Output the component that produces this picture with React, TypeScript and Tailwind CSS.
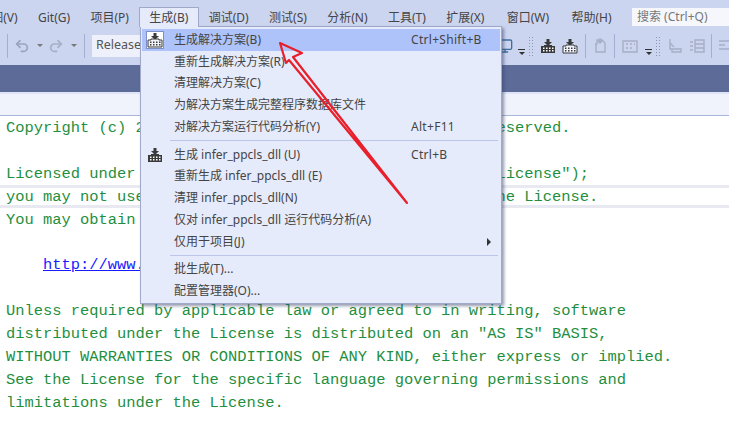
import React from "react";
import { Undo2, Redo2, Monitor } from "lucide-react";

const cjk = { fontFamily: '"Noto Sans", "Noto Sans CJK SC", sans-serif' };

function BuildIcon({ boxed = false, hollow = false }: { boxed?: boolean; hollow?: boolean }) {
  return (
    <svg width="16" height="16" viewBox="0 0 16 16" className={boxed ? "bg-white outline outline-1 outline-[#7d8fc4]" : ""}>
      <path d="M6.5 1h3v3H12L8 8 4 4h2.5z" fill="#3a3a3a" />
      <path d="M1 8h3v-1h8v1h3v7H1z" fill={hollow ? "#f2f4fb" : "#3a3a3a"} stroke="#3a3a3a" strokeWidth={hollow ? 1 : 0} />
      {[3, 6, 9, 12].map((x) => (
        <g key={x}>
          <rect x={x} y="9.5" width="1.5" height="1.5" fill={hollow ? "#3a3a3a" : "#fff"} />
          <rect x={x} y="12" width="1.5" height="1.5" fill={hollow ? "#3a3a3a" : "#fff"} />
        </g>
      ))}
    </svg>
  );
}

function Sep() {
  return <div className="w-px h-[24px] bg-[#a3aed0]" />;
}

function Caret({ color = "#777" }: { color?: string }) {
  return <div className="w-0 h-0 border-x-[3.5px] border-x-transparent border-t-[3.5px]" style={{ borderTopColor: color }} />;
}

function Grip() {
  return <div className="w-[7px] h-[20px] bg-[radial-gradient(#8b95b5_1px,transparent_1px)] bg-[length:3px_3px]" />;
}

function OverflowDrop() {
  return (
    <div className="flex flex-col items-center gap-[2px] mt-[12px]">
      <div className="w-[7px] h-px bg-[#333]" />
      <Caret color="#333" />
    </div>
  );
}

function FadedIcon({ d }: { d: string }) {
  return (
    <svg width="18" height="18" viewBox="0 0 18 18" fill="none" stroke="#a7afc6" strokeWidth="1.4">
      <path d={d} />
    </svg>
  );
}

function MenuRow({ label, shortcut, icon, active, sub }: { label: string; shortcut?: string; icon?: React.ReactNode; active?: boolean; sub?: boolean }) {
  return (
    <div className={"flex items-center h-[21.8px] text-[12px] text-[#444] " + (active ? "bg-[#afc3fb]" : "")}>
      <div className="w-[32px] flex justify-start pl-[5px]">{icon}</div>
      <div className="w-[237px] whitespace-nowrap">{label}</div>
      <div className="flex-1 whitespace-nowrap tracking-[0.3px]">{shortcut}</div>
      {sub && <div className="w-0 h-0 mr-[9px] border-y-[4px] border-y-transparent border-l-[4px] border-l-[#333]" />}
    </div>
  );
}

function MenuSep() {
  return <div className="ml-[28px] mr-[2px] my-[2.4px] h-px bg-[#bcc6e6]" />;
}

const menus = ["视图(V)", "Git(G)", "项目(P)", "生成(B)", "调试(D)", "测试(S)", "分析(N)", "工具(T)", "扩展(X)", "窗口(W)", "帮助(H)"];

const code: { text?: string; link?: boolean; current?: boolean }[] = [
  { text: "Copyright (c) 2022 PaddlePaddle Authors. All Rights Reserved." },
  {},
  { text: 'Licensed under the Apache License, Version 2.0 (the "License");' },
  { text: "you may not use this file except in compliance with the License.", current: true },
  { text: "You may obtain a copy of the License at" },
  {},
  { text: "http://www.apache.org/licenses/LICENSE-2.0", link: true },
  {},
  { text: "Unless required by applicable law or agreed to in writing, software" },
  { text: 'distributed under the License is distributed on an "AS IS" BASIS,' },
  { text: "WITHOUT WARRANTIES OR CONDITIONS OF ANY KIND, either express or implied." },
  { text: "See the License for the specific language governing permissions and" },
  { text: "limitations under the License." },
];

export default function App() {
  return (
    <div className="relative w-[729px] h-[434px] overflow-hidden bg-white flex flex-col" style={cjk}>
      {/* menu bar */}
      <div className="h-[27px] bg-[#ccd5f0] flex items-end shrink-0 text-[12px] text-[#444]">
        <div className="flex -ml-[31px] flex-1 min-w-0">
          {menus.map((m) => (
            <div
              key={m}
              className={
                "h-[20px] px-[9.2px] flex items-center whitespace-nowrap border-x border-t " +
                (m === "生成(B)" ? "relative z-20 bg-[#e6ebfb] border-[#a0aac8] " : "border-transparent ") +
                (m === "窗口(W)" || m === "帮助(H)" ? "ml-[2px]" : "")
              }
            >
              {m}
            </div>
          ))}
        </div>
      </div>
      <div className="absolute right-0 top-[8px] w-[97px] h-[18px] bg-[#f5f7fd] pl-[5px] flex items-center text-[12px] text-[#777] whitespace-nowrap">
        搜索 (Ctrl+Q)
      </div>

      {/* toolbar */}
      <div className="h-[38px] bg-[#ccd5f0] flex items-center justify-between shrink-0 pl-[7px] pb-[1px]">
        <div className="flex items-center">
          <Sep />
          <Undo2 size={16} className="ml-[6px] text-[#9aa3bd]" strokeWidth={2.6} />
          <div className="ml-[7px]"><Caret /></div>
          <Redo2 size={16} className="ml-[5px] text-[#a7afc6]" strokeWidth={2.6} />
          <div className="ml-[7px]"><Caret /></div>
          <div className="ml-[7px]"><Sep /></div>
          <div className="ml-[7px] w-[60px] h-[22px] bg-[#eef1fb] pl-[4px] flex items-center text-[12.5px] text-[#555]">Release</div>
        </div>
        <div className="flex items-center -mr-[5px]">
          <Monitor size={16} className="text-[#3f6f9f]" />
          <div className="ml-[5px]"><OverflowDrop /></div>
          <div className="ml-[3px]"><Grip /></div>
          <div className="ml-[5px]"><BuildIcon /></div>
          <div className="ml-[6px]"><BuildIcon hollow /></div>
          <div className="ml-[7px]"><Sep /></div>
          <div className="ml-[5px]"><FadedIcon d="M4 7h2V3h5l3 3v9H5V7M9 1v5M7 4l2 2 2-2" /></div>
          <div className="ml-[5px]"><Sep /></div>
          <div className="ml-[6px]"><FadedIcon d="M2 4h14v11H2zM5 7h2M9 7h2M13 7h1M5 11h2M9 11h2" /></div>
          <div className="ml-[6px]"><OverflowDrop /></div>
          <div className="ml-[3px]"><Grip /></div>
          <div className="ml-[4px]"><FadedIcon d="M4 2v10h11v3H6v-3M4 6l4 4" /></div>
          <div className="ml-[4px]"><FadedIcon d="M7 3h9v12H7zM7 7h9M7 11h9M2 5h3M2 9h3M2 13h3" /></div>
          <div className="ml-[5px]"><Sep /></div>
          <div className="ml-[4px]"><FadedIcon d="M3 4h10M3 8h6M3 12h10" /></div>
        </div>
      </div>

      {/* dark tab well */}
      <div className="h-[27px] bg-[#5d6b99] shrink-0" />
      <div className="h-[24px] bg-[#f0f3fc] border-t-2 border-[#dfe5f6] border-b border-b-[#a9b6dc] shrink-0" />

      {/* editor */}
      <div className="flex-1 pl-[6px] font-['Liberation_Mono',monospace] text-[15.43px] text-[#1f8f3f]">
        {code.map((line, i) => (
          <div
            key={i}
            className={
              "h-[22.92px] whitespace-pre box-border " +
              (line.current ? "leading-[19px] border-y-[3px] border-[#e9e9f1] -ml-[6px] pl-[6px]" : "leading-[25px]")
            }
          >
            {line.link ? <span className="ml-[37px] text-[#1a1aff] underline">{line.text}</span> : line.text}
          </div>
        ))}
      </div>

      {/* build dropdown */}
      <div className="absolute z-10 left-[140px] top-[26px] w-[362px] h-[278px] bg-[#e6ebfb] border border-[#a0aac8] shadow-[2px_2px_3px_rgba(60,70,110,0.55)] px-[1px] pt-[2px]">
        <MenuRow label="生成解决方案(B)" shortcut="Ctrl+Shift+B" active icon={<BuildIcon boxed hollow />} />
        <MenuRow label="重新生成解决方案(R)" />
        <MenuRow label="清理解决方案(C)" />
        <MenuRow label="为解决方案生成完整程序数据库文件" />
        <MenuRow label="对解决方案运行代码分析(Y)" shortcut="Alt+F11" />
        <MenuSep />
        <MenuRow label="生成 infer_ppcls_dll (U)" shortcut="Ctrl+B" icon={<BuildIcon />} />
        <MenuRow label="重新生成 infer_ppcls_dll (E)" />
        <MenuRow label="清理 infer_ppcls_dll(N)" />
        <MenuRow label="仅对 infer_ppcls_dll 运行代码分析(A)" />
        <MenuRow label="仅用于项目(J)" sub />
        <MenuSep />
        <MenuRow label="批生成(T)..." />
        <MenuRow label="配置管理器(O)..." />
      </div>

      {/* red annotation arrow */}
      <svg className="absolute inset-0 z-30 pointer-events-none" width="729" height="434" viewBox="0 0 729 434" fill="none">
        <path d="M280 43 L302 53 L293 57 L407 203 L289 60 L286 63 Z" stroke="#e8202c" strokeWidth="2.2" strokeLinejoin="round" />
      </svg>
    </div>
  );
}
